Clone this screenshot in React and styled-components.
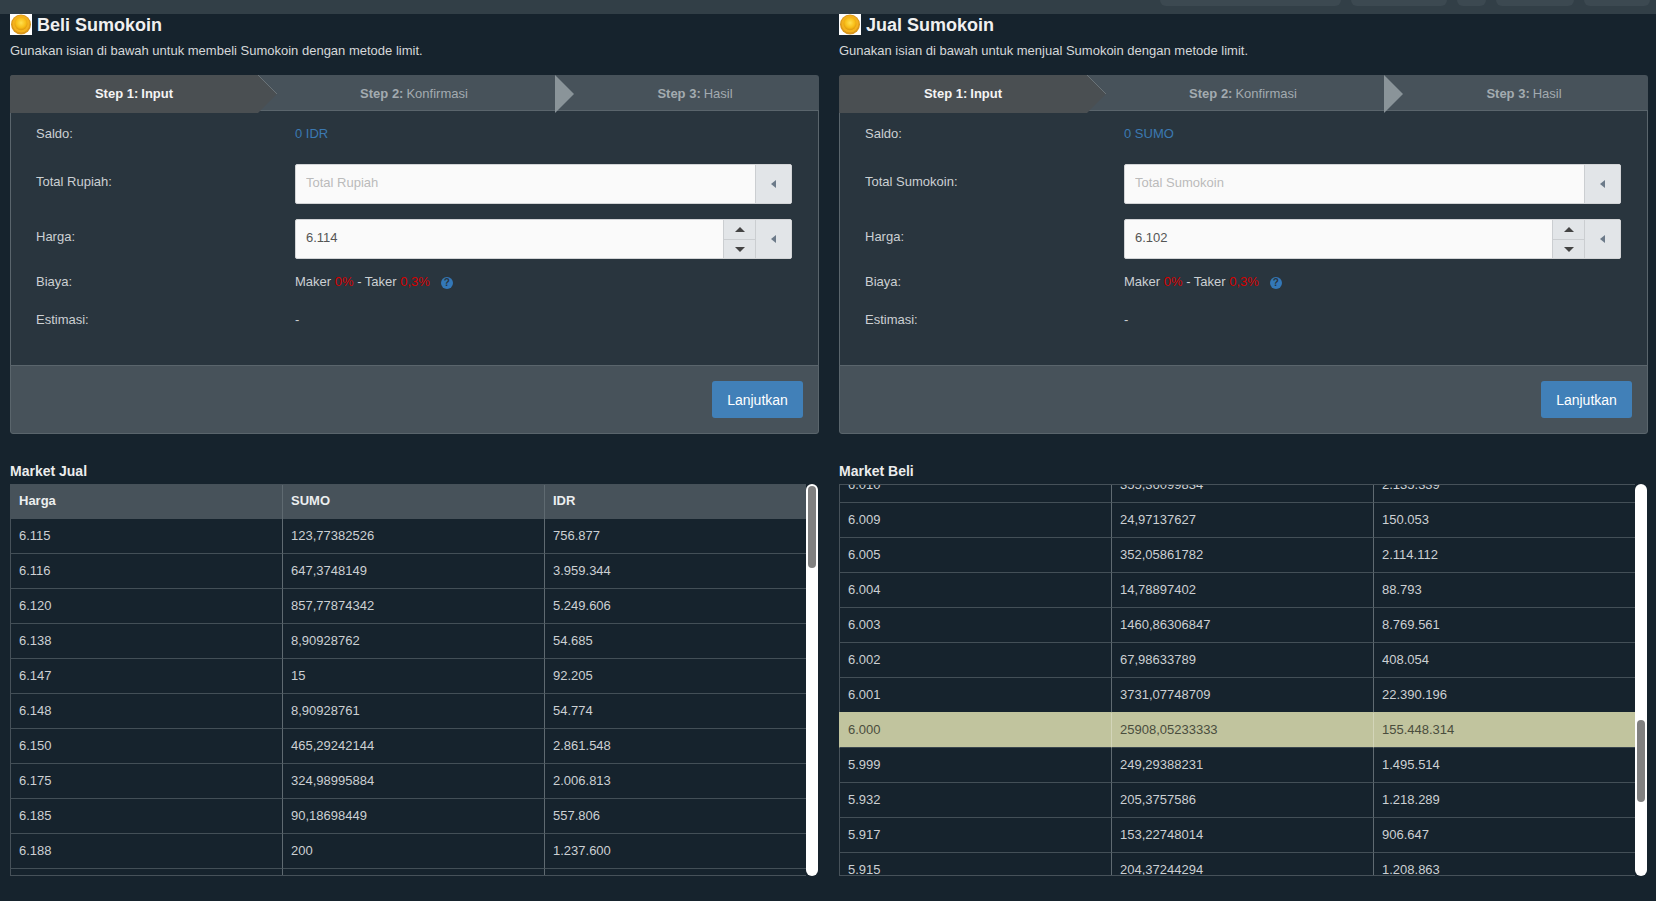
import React, { useLayoutEffect, useRef } from 'react';
import styled, { createGlobalStyle } from 'styled-components';

const GlobalStyle = createGlobalStyle`
	html, body {
		margin: 0;
		background: #16232d;
		font-family: "Liberation Sans", Arial, sans-serif;
		font-size: 13px;
		color: #ccd0d3;
		overflow: hidden;
	}
`;

const Page = styled.div`
	height: 901px;
	overflow: hidden;
`;
const TopBar = styled.div`
	height: 14px;
	background: #323f47;
	display: flex;
	justify-content: flex-end;
	gap: 10px;
	padding-right: 6px;
`;
const TopPill = styled.div`
	width: ${props => props.$width}px;
	height: 6px;
	background: #3c4951;
	border-radius: 0 0 8px 8px;
`;
const Columns = styled.div`
	display: grid;
	grid-template-columns: 809px 809px;
	column-gap: 20px;
	padding-left: 10px;
`;
const Column = styled.section``;
const Title = styled.h2`
	display: flex;
	align-items: center;
	gap: 5px;
	margin: 0;
	height: 21px;
	font-size: 18px;
	font-weight: 700;
	color: #f0f0f0;
`;
const TitleText = styled.span`
	padding-top: 2px;
`;
const Intro = styled.p`
	margin: 7px 0 0;
	height: 33px;
	line-height: 18px;
	color: #d5d8da;
`;
const Panel = styled.div`
	border-radius: 3px;
`;
const Steps = styled.div`
	display: flex;
	height: 36px;
	background: #47525a;
	border-radius: 3px 3px 0 0;
	box-shadow: inset 0 -1px 0 #5a656c;
`;
const Step = styled.div`
	position: relative;
	flex: ${props => (props.$grow ? '1' : 'none')};
	width: ${props => (props.$width ? props.$width + 'px' : 'auto')};
	height: ${props => (props.$active ? 38 : 36)}px;
	padding-left: ${props => props.$indent || 0}px;
	box-sizing: border-box;
	display: flex;
	align-items: center;
	justify-content: center;
	padding-bottom: ${props => (props.$active ? 2 : 0)}px;
	background: ${props => (props.$active ? '#4a4f52' : 'transparent')};
	border-radius: ${props => (props.$active ? '3px 0 0 0' : '0')};
	color: ${props => (props.$active ? '#f4f4f4' : '#a3abb0')};
	font-weight: ${props => (props.$active ? 700 : 400)};
	z-index: ${props => (props.$active ? 2 : 1)};
	strong {
		margin-right: 3px;
	}
`;
const StepArrowWrap = styled.span`
	position: absolute;
	top: 0;
	left: 100%;
	display: flex;
	z-index: 3;
`;
const FormBody = styled.div`
	border: 1px solid #5a656c;
	border-top: 0;
	background: #29353e;
	padding: 14px 26px 36px 25px;
`;
const Row = styled.div`
	display: grid;
	grid-template-columns: 259px 497px;
	margin-bottom: ${props => props.$after || 0}px;
	line-height: 18px;
`;
const RowLabel = styled.div`
	padding-top: ${props => props.$offset || 0}px;
	color: #ccd0d3;
`;
const Balance = styled.div`
	color: #3b79b2;
`;
const Red = styled.span`
	color: #d80000;
`;
const Help = styled.span`
	display: inline-flex;
	align-items: center;
	justify-content: center;
	width: 12px;
	height: 12px;
	margin-left: 11px;
	border-radius: 50%;
	background: #3378b8;
	color: #29353e;
	font-size: 10px;
	font-weight: 700;
	line-height: 12px;
	vertical-align: 0;
`;
const Field = styled.div`
	display: flex;
	height: 40px;
	box-sizing: border-box;
	border: 1px solid #d2d4d6;
	border-radius: 2px;
	background: #fafafa;
	overflow: hidden;
`;
const FieldInput = styled.input`
	flex: 1;
	min-width: 0;
	border: 0;
	outline: 0;
	background: transparent;
	padding: 0 10px 3px;
	font: 13px "Liberation Sans", Arial, sans-serif;
	color: #555;
	&::placeholder {
		color: #bbb;
		opacity: 1;
	}
`;
const Addon = styled.div`
	width: 36px;
	box-sizing: border-box;
	flex: none;
	display: flex;
	align-items: center;
	justify-content: center;
	background: #e2e5e8;
	border-left: 1px solid #cbced1;
`;
const Spinner = styled.div`
	width: 32px;
	box-sizing: border-box;
	flex: none;
	display: grid;
	grid-template-rows: 1fr 1fr;
	background: #e2e5e8;
	border-left: 1px solid #cbced1;
`;
const SpinButton = styled.div`
	display: flex;
	align-items: center;
	justify-content: center;
	border-top: ${props => (props.$down ? '1px solid #cbced1' : '0')};
`;
const Caret = styled.span`
	width: 0;
	height: 0;
	border-left: 5px solid transparent;
	border-right: 5px solid transparent;
	border-bottom: ${props => (props.$down ? '0' : '5px solid #444')};
	border-top: ${props => (props.$down ? '5px solid #444' : '0')};
`;
const CollapseCaret = styled.span`
	width: 0;
	height: 0;
	border-top: 4px solid transparent;
	border-bottom: 4px solid transparent;
	border-right: 5px solid #6c7a89;
`;
const PanelFooter = styled.div`
	display: flex;
	justify-content: flex-end;
	height: 69px;
	box-sizing: border-box;
	padding: 15px 15px 0 0;
	background: #47525a;
	border: 1px solid #5a656c;
	border-radius: 0 0 3px 3px;
	margin-top: -1px;
`;
const Button = styled.button`
	width: 91px;
	height: 37px;
	border: 0;
	border-radius: 3px;
	background: #4180b8;
	color: #fff;
	font: 14px "Liberation Sans", Arial, sans-serif;
`;
const MarketTitle = styled.h3`
	margin: 28px 0 0;
	height: 22px;
	line-height: 18px;
	font-size: 14px;
	font-weight: 700;
	color: #ececec;
`;
const MarketBox = styled.div`
	position: relative;
	display: flex;
	width: 808px;
	height: 392px;
	&::before,
	&::after {
		content: '';
		position: absolute;
		left: 0;
		right: 12px;
		height: 1px;
		background: #465159;
		z-index: 2;
	}
	&::before {
		top: 0;
	}
	&::after {
		bottom: 0;
	}
`;
const MarketScroll = styled.div`
	flex: 1;
	min-width: 0;
	overflow: hidden;
`;
const ScrollTrack = styled.div`
	width: 12px;
	flex: none;
	box-sizing: border-box;
	padding: 2px;
	background: #fff;
	border-radius: 6px;
`;
const ScrollThumb = styled.div`
	height: 82px;
	background: #808080;
	border-radius: 4px;
`;
const Table = styled.table`
	width: 796px;
	table-layout: fixed;
	border-collapse: separate;
	border-spacing: 0;
`;
const Th = styled.th`
	box-sizing: border-box;
	height: 35px;
	padding: 0 8px 2px;
	text-align: left;
	font-size: 13px;
	font-weight: 700;
	color: #eceeef;
	background: #47525a;
	border-left: 1px solid #5f6a71;
	&:first-child {
		border-left-color: #47525a;
	}
`;
const Td = styled.td`
	box-sizing: border-box;
	height: 35px;
	padding: 0 8px 2px;
	color: ${props => (props.$mark ? '#4a4d3d' : '#ccd0d3')};
	background: ${props => (props.$mark ? '#c1c49e' : 'transparent')};
	box-shadow: ${props => (props.$mark ? '0 -1px 0 #c1c49e' : 'none')};
	border-bottom: 1px solid ${props => (props.$mark ? '#3a464e' : '#434f57')};
	border-left: 1px solid ${props => (props.$mark ? '#d3d5b9' : '#5f6a71')};
	&:first-child {
		border-left-color: ${props => (props.$mark ? '#c1c49e' : '#465159')};
	}
`;

function CoinIcon() {
	return (
		<svg width='22' height='21' viewBox='0 0 22 21'>
			<defs>
				<radialGradient id='coinFace' cx='50%' cy='42%' r='55%'>
					<stop offset='0%' stopColor='#ffe04f' />
					<stop offset='70%' stopColor='#f8bd17' />
					<stop offset='100%' stopColor='#e09c10' />
				</radialGradient>
			</defs>
			<rect width='22' height='21' fill='#fff' />
			<circle cx='11' cy='10.5' r='10' fill='#d9961c' />
			<circle cx='11' cy='9.8' r='8.6' fill='#f4b21d' />
			<circle cx='11' cy='9.8' r='6.4' fill='url(#coinFace)' />
		</svg>
	);
}

function StepArrow({ fill, edge }) {
	return (
		<StepArrowWrap>
			<svg width='20' height='38' viewBox='0 0 20 38'>
				<polygon points='0,0 19,19 0,38' fill={fill} />
				{edge && <polyline points='0,0 19,19' fill='none' stroke={edge} strokeWidth='1' />}
			</svg>
		</StepArrowWrap>
	);
}

function StepBar() {
	return (
		<Steps>
			<Step $active $width={248}>
				<strong>Step 1:</strong> Input
				<StepArrow fill='#4a4f52' edge='#6a7378' />
			</Step>
			<Step $width={297} $indent={15}>
				<strong>Step 2:</strong> Konfirmasi
				<StepArrow fill='#8a9499' />
			</Step>
			<Step $grow $indent={16}>
				<strong>Step 3:</strong> Hasil
			</Step>
		</Steps>
	);
}

function OrderForm({ balance, amountLabel, price }) {
	return (
		<Panel>
			<StepBar />
			<FormBody>
				<Row $after={21}>
					<RowLabel>Saldo:</RowLabel>
					<Balance>{balance}</Balance>
				</Row>
				<Row $after={15}>
					<RowLabel $offset={9}>{amountLabel}:</RowLabel>
					<Field>
						<FieldInput placeholder={amountLabel} readOnly />
						<Addon>
							<CollapseCaret />
						</Addon>
					</Field>
				</Row>
				<Row $after={14}>
					<RowLabel $offset={9}>Harga:</RowLabel>
					<Field>
						<FieldInput defaultValue={price} readOnly />
						<Spinner>
							<SpinButton>
								<Caret />
							</SpinButton>
							<SpinButton $down>
								<Caret $down />
							</SpinButton>
						</Spinner>
						<Addon>
							<CollapseCaret />
						</Addon>
					</Field>
				</Row>
				<Row $after={20}>
					<RowLabel>Biaya:</RowLabel>
					<div>
						Maker <Red>0%</Red> - Taker <Red>0,3%</Red>
						<Help>?</Help>
					</div>
				</Row>
				<Row>
					<RowLabel>Estimasi:</RowLabel>
					<div>-</div>
				</Row>
			</FormBody>
			<PanelFooter>
				<Button>Lanjutkan</Button>
			</PanelFooter>
		</Panel>
	);
}

const ROW_HEIGHT = 35;
const BOX_HEIGHT = 392;
const THUMB_SPACE = BOX_HEIGHT - 4 - 82;

function MarketTable({ coin, rows, scrollTop = 0 }) {
	const scroller = useRef(null);
	const contentHeight = ROW_HEIGHT * (rows.length + 1);
	const thumbOffset = (scrollTop / (contentHeight - BOX_HEIGHT)) * THUMB_SPACE;

	useLayoutEffect(() => {
		scroller.current.scrollTop = scrollTop;
	}, [scrollTop]);

	return (
		<MarketBox>
			<MarketScroll ref={scroller}>
				<Table>
					<colgroup>
						<col width='272' />
						<col width='262' />
						<col />
					</colgroup>
					<thead>
						<tr>
							<Th>Harga</Th>
							<Th>{coin}</Th>
							<Th>IDR</Th>
						</tr>
					</thead>
					<tbody>
						{rows.map(row => (
							<tr key={row[0]}>
								{row.map((cell, i) => (
									<Td key={i} $mark={row[0] === '6.000'}>
										{cell}
									</Td>
								))}
							</tr>
						))}
					</tbody>
				</Table>
			</MarketScroll>
			<ScrollTrack>
				<ScrollThumb style={{ marginTop: thumbOffset }} />
			</ScrollTrack>
		</MarketBox>
	);
}

function moreRows(start, count, step) {
	return Array.from({ length: count }, (_, i) => {
		const price = start + i * step;
		const amount = 40 + ((i * 37) % 90);
		return [
			price.toLocaleString('de-DE'),
			String(amount),
			(price * amount).toLocaleString('de-DE')
		];
	});
}

const sellRows = [
	['6.115', '123,77382526', '756.877'],
	['6.116', '647,3748149', '3.959.344'],
	['6.120', '857,77874342', '5.249.606'],
	['6.138', '8,90928762', '54.685'],
	['6.147', '15', '92.205'],
	['6.148', '8,90928761', '54.774'],
	['6.150', '465,29242144', '2.861.548'],
	['6.175', '324,98995884', '2.006.813'],
	['6.185', '90,18698449', '557.806'],
	['6.188', '200', '1.237.600'],
	...moreRows(6190, 40, 5)
];

const buyRows = [
	...moreRows(6300, 29, -10),
	['6.010', '355,36099834', '2.135.339'],
	['6.009', '24,97137627', '150.053'],
	['6.005', '352,05861782', '2.114.112'],
	['6.004', '14,78897402', '88.793'],
	['6.003', '1460,86306847', '8.769.561'],
	['6.002', '67,98633789', '408.054'],
	['6.001', '3731,07748709', '22.390.196'],
	['6.000', '25908,05233333', '155.448.314'],
	['5.999', '249,29388231', '1.495.514'],
	['5.932', '205,3757586', '1.218.289'],
	['5.917', '153,22748014', '906.647'],
	['5.915', '204,37244294', '1.208.863'],
	...moreRows(5900, 9, -5)
];

export default function App() {
	return (
		<Page>
			<GlobalStyle />
			<TopBar>
				<TopPill $width={181} />
				<TopPill $width={96} />
				<TopPill $width={29} />
				<TopPill $width={78} />
				<TopPill $width={66} />
			</TopBar>
			<Columns>
				<Column>
					<Title>
						<CoinIcon />
						<TitleText>Beli Sumokoin</TitleText>
					</Title>
					<Intro>Gunakan isian di bawah untuk membeli Sumokoin dengan metode limit.</Intro>
					<OrderForm balance='0 IDR' amountLabel='Total Rupiah' price='6.114' />
					<MarketTitle>Market Jual</MarketTitle>
					<MarketTable coin='SUMO' rows={sellRows} />
				</Column>
				<Column>
					<Title>
						<CoinIcon />
						<TitleText>Jual Sumokoin</TitleText>
					</Title>
					<Intro>Gunakan isian di bawah untuk menjual Sumokoin dengan metode limit.</Intro>
					<OrderForm balance='0 SUMO' amountLabel='Total Sumokoin' price='6.102' />
					<MarketTitle>Market Beli</MarketTitle>
					<MarketTable coin='SUMO' rows={buyRows} scrollTop={1066} />
				</Column>
			</Columns>
		</Page>
	);
}
